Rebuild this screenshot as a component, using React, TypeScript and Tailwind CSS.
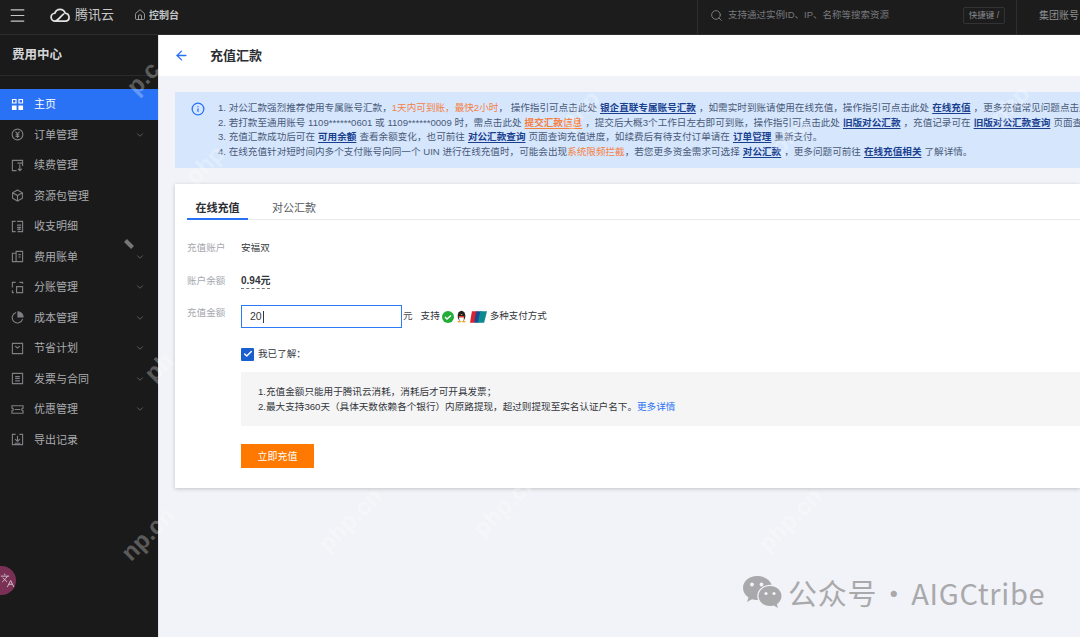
import { ReactNode } from 'react';
import { ArrowLeft, Check, ChevronDown, House, Info, Languages, Menu, Search } from 'lucide-react';

const cjk = '[font-family:"Liberation_Sans","Noto_Sans_CJK_SC",sans-serif]';

const Glyph = (props: { children: ReactNode }) => (
  <svg viewBox="0 0 14 14" fill="none" stroke="currentColor" strokeWidth="1.2" className="size-[13px] shrink-0">
    {props.children}
  </svg>
);

const menuItems: { label: string; chevron?: boolean; active?: boolean; icon: ReactNode }[] = [
  {
    label: '主页',
    active: true,
    icon: (
      <svg viewBox="0 0 14 14" fill="currentColor" className="size-[13px] shrink-0">
        <path d="M1 1h5v5H1zM8 1h5v5H8zM1 8h5v5H1zM8 8h5v5H8z" />
        <path d="M2.2 2.2v2.6h2.6V2.2zM9.2 2.2v2.6h2.6V2.2z" fill="#2a72f5" />
      </svg>
    ),
  },
  {
    label: '订单管理',
    chevron: true,
    icon: (
      <Glyph>
        <circle cx="7" cy="7" r="5.8" />
        <path d="M4.8 3.8 7 6.4l2.2-2.6M7 6.4v4.4M5 7.2h4M5 9h4" />
      </Glyph>
    ),
  },
  {
    label: '续费管理',
    icon: (
      <Glyph>
        <path d="M6 12.5H1.5v-11h11v6M9.5 6v6.5M7.5 10.5l2 2 2-2M7 4.5h5" />
      </Glyph>
    ),
  },
  {
    label: '资源包管理',
    icon: (
      <Glyph>
        <path d="m7 1 5.3 3v6L7 13l-5.3-3V4zM1.7 4 7 7l5.3-3M7 7v6" />
      </Glyph>
    ),
  },
  {
    label: '收支明细',
    icon: (
      <Glyph>
        <path d="M5 12.5H1.5v-11H5M6.5 1.5h6v11H7M6.5 5.5H11M6.5 8H11M8.7 8v3M6.5 10H11" />
      </Glyph>
    ),
  },
  {
    label: '费用账单',
    chevron: true,
    icon: (
      <Glyph>
        <path d="M1.5 3.5h4v9h-4zM5.5 1.5h7v11h-7zM8 5h2.5M8 7.5h2.5" />
      </Glyph>
    ),
  },
  {
    label: '分账管理',
    chevron: true,
    icon: (
      <Glyph>
        <path d="M5 1.5H1.5V7M9 1.5h3.5V3M1.5 10v2.5H3M6 6h6.5v6.5H6z" />
      </Glyph>
    ),
  },
  {
    label: '成本管理',
    chevron: true,
    icon: (
      <svg viewBox="0 0 14 14" fill="none" stroke="currentColor" strokeWidth="1.2" className="size-[13px] shrink-0">
        <path d="M5.5 1.7a5.7 5.7 0 1 0 7 7" />
        <path d="M7.5 1v5.5H13A5.5 5.5 0 0 0 7.5 1Z" fill="currentColor" />
      </svg>
    ),
  },
  {
    label: '节省计划',
    chevron: true,
    icon: (
      <Glyph>
        <path d="M1.5 1.5h11v11h-11zM4.5 4.5 7 6.5l2.5-2" />
      </Glyph>
    ),
  },
  {
    label: '发票与合同',
    chevron: true,
    icon: (
      <Glyph>
        <path d="M1.5 1.5h11v11h-11zM4.5 5h5M4.5 7h5M4.5 9.5h5" />
      </Glyph>
    ),
  },
  {
    label: '优惠管理',
    chevron: true,
    icon: (
      <Glyph>
        <path d="M1 3h12v2.5a1.5 1.5 0 0 0 0 3V11H1V8.5a1.5 1.5 0 0 0 0-3zM4 7h6" />
      </Glyph>
    ),
  },
  {
    label: '导出记录',
    icon: (
      <Glyph>
        <path d="M5 1.5H1.5v11h11v-11H9M7 3v6M4.5 6.5 7 9l2.5-2.5M4 11h6" />
      </Glyph>
    ),
  },
];

// faint diagonal site marks that lie over the whole page: centre x, centre y, text
const marks: [number, number, string][] = [
  [143, 78, 'p.c'],
  [205, 165, 'php'],
  [159, 367, 'ph'],
  [148, 534, 'np.cn'],
  [580, 110, 'php'],
  [1010, 105, 'php'],
  [790, 135, 'php'],
  [505, 505, 'php.cn'],
  [790, 520, 'php.cn'],
  [350, 520, 'php.cn'],
];

const NoticeLink = (props: { children: ReactNode }) => (
  <span className="mx-[3px] font-bold text-[#1a3f8f] underline underline-offset-2">{props.children}</span>
);

const Hot = (props: { children: ReactNode }) => <span className="text-[#f5813f]">{props.children}</span>;

const Row = (props: { label: string; children: ReactNode; className?: string }) => (
  <div className={`flex items-start ${props.className ?? ''}`}>
    <div className="w-[54px] shrink-0 text-[9.6px] leading-[14px] text-[#a5a8ad]">{props.label}</div>
    {props.children}
  </div>
);

export default function App() {
  return (
    <div className={`relative flex h-[637px] w-[1080px] flex-col overflow-hidden bg-[#f2f3f8] ${cjk}`}>
      <header className="flex h-[35px] shrink-0 items-stretch whitespace-nowrap border-b border-[#2e2e2e] bg-[#1c1c1c] text-[#c4c6c9]">
        <div className="flex w-[697px] shrink-0 items-center pb-[4px]">
          <Menu className="ml-[8px] size-[19px]" strokeWidth={1.5} />
          <svg viewBox="0 0 24 16" className="ml-[23px] h-[16px] w-[21px] text-[#e2e2e2]" fill="none" stroke="currentColor" strokeWidth="2">
            <path d="M6 15a4.5 4.5 0 0 1-.5-9C6.5 3 9 1.5 11.5 1.5c3 0 5 1.8 5.8 4.5A4.6 4.6 0 0 1 18.5 15Zm0 0c4-1 7-7 10-8.5" />
          </svg>
          <span className="ml-[4px] text-[13px] text-[#c8c8c8]">腾讯云</span>
          <House className="ml-[20px] size-[12px]" strokeWidth={1.4} />
          <span className="ml-[3px] text-[10px] font-bold">控制台</span>
        </div>
        <div className="flex w-[320px] shrink-0 items-center border-x border-[#2e2e2e] pb-[4px]">
          <Search className="ml-[12px] size-[13px] text-[#8b8d90]" strokeWidth={1.5} />
          <span className="ml-[5px] text-[9.5px] text-[#77797c]">支持通过实例ID、IP、名称等搜索资源</span>
          <span className="ml-auto mr-[11px] rounded-[2px] border border-[#333] px-[5px] py-[2px] text-[8.5px] leading-[11px] text-[#8c8e91]">快捷键 /</span>
        </div>
        <div className="flex items-center pb-[4px] pl-[22px] text-[10px] text-[#8c8e91]">集团账号</div>
      </header>

      <div className="flex min-h-0 flex-1">
        <aside className="w-[158px] shrink-0 bg-[#1a1a1a]">
          <div className="flex h-[41px] items-center border-b border-[#2a2a2a] pl-[12px] text-[12.5px] font-bold text-[#d5d6d8]">费用中心</div>
          <nav className="mt-[13px]">
            {menuItems.map((item) => (
              <div
                key={item.label}
                className={`flex h-[30.5px] items-center pl-[11px] pr-[13px] text-[11px] ${
                  item.active ? 'bg-[#2a72f5] text-white' : 'text-[#a9abae]'
                }`}
              >
                <span className={item.active ? '' : 'text-[#7d7f82]'}>{item.icon}</span>
                <span className="ml-[10px]">{item.label}</span>
                {item.chevron ? <ChevronDown className="ml-auto size-[10px] text-[#66686b]" /> : null}
              </div>
            ))}
          </nav>
        </aside>

        <main className="min-w-0 flex-1 border-l border-[#e3e4e8]">
          <div className="flex h-[41px] items-center bg-white pl-[15px]">
            <ArrowLeft className="size-[15px] text-[#2a72f5]" strokeWidth={2.2} />
            <h1 className="ml-[21px] text-[13px] font-bold text-[#2b2e33]">充值汇款</h1>
          </div>

          <div className="ml-[16px] mt-[16px] flex h-[76px] items-start overflow-hidden bg-[#d5e6fd] pl-[16px] pt-[9px]">
            <Info className="mt-[0.5px] size-[14px] shrink-0 text-[#2a72f5]" strokeWidth={2.2} />
            <div className="ml-[13px] whitespace-nowrap text-[9.6px] leading-[14.5px] text-[#4a5a78]">
              <div>
                1. 对公汇款强烈推荐使用专属账号汇款，<Hot>1天内可到账，最快2小时</Hot>， 操作指引可点击此处
                <NoticeLink>银企直联专属账号汇款</NoticeLink>，如需实时到账请使用在线充值，操作指引可点击此处
                <NoticeLink>在线充值</NoticeLink>，更多充值常见问题点击此处
              </div>
              <div>
                2. 若打款至通用账号 1109******0601 或 1109******0009 时，需点击此处
                <span className="mx-[3px] font-bold text-[#f5813f] underline underline-offset-2">提交汇款信息</span>
                ，提交后大概3个工作日左右即可到账，操作指引可点击此处
                <NoticeLink>旧版对公汇款</NoticeLink>，充值记录可在<NoticeLink>旧版对公汇款查询</NoticeLink>页面查询
              </div>
              <div>
                3. 充值汇款成功后可在<NoticeLink>可用余额</NoticeLink>查看余额变化，也可前往
                <NoticeLink>对公汇款查询</NoticeLink>页面查询充值进度，如续费后有待支付订单请在
                <NoticeLink>订单管理</NoticeLink>重新支付。
              </div>
              <div>
                4. 在线充值针对短时间内多个支付账号向同一个 UIN 进行在线充值时，可能会出现<Hot>系统限频拦截</Hot>，若您更多资金需求可选择
                <NoticeLink>对公汇款</NoticeLink>，更多问题可前往<NoticeLink>在线充值相关</NoticeLink>了解详情。
              </div>
            </div>
          </div>

          <section className="ml-[16px] mt-[16px] h-[304px] bg-white pl-[12px] pt-[13px] shadow-[0_1px_4px_rgba(0,0,0,0.2)]">
            <div className="flex h-[23px] border-b border-[#e8e9ec] text-[11px]">
              <div className="-mb-px w-[61px] border-b-2 border-[#2a72f5] pt-[3px] text-center font-bold text-[#2b2e33]">在线充值</div>
              <div className="ml-[24px] pt-[3px] text-[#55585d]">对公汇款</div>
            </div>

            <Row label="充值账户" className="mt-[21px]">
              <span className="text-[9.6px] leading-[14px] text-[#33363b]">安福双</span>
            </Row>
            <Row label="账户余额" className="mt-[19px]">
              <span className="border-b border-dashed border-[#77797c] text-[10px] font-bold leading-[14px] text-[#33363b]">0.94元</span>
            </Row>
            <Row label="充值金额" className="mt-[17px]">
              <div className="-mt-px flex h-[23px] items-center">
                <div className="h-[23px] w-[161px] bg-[#2a7bf5] p-px">
                  <div className="flex h-full items-center bg-white pl-[8px] text-[10.5px] text-[#33363b]">
                    20<span className="ml-px h-[12px] w-px bg-[#33363b]" />
                  </div>
                </div>
                <span className="ml-px text-[9.6px] text-[#4a4d52]">元</span>
                <span className="ml-[8px] text-[9.6px] text-[#33363b]">支持</span>
                <svg viewBox="0 0 12 12" className="ml-[2px] size-[12px]">
                  <circle cx="6" cy="6" r="6" fill="#22ac38" />
                  <path d="m3 6 2 2 4-3.5" fill="none" stroke="#fff" strokeWidth="1.5" />
                </svg>
                <svg viewBox="0 0 12 13" className="ml-[2px] h-[13px] w-[11px]">
                  <ellipse cx="6" cy="6" rx="4.2" ry="5.8" fill="#222" />
                  <ellipse cx="6" cy="8.8" rx="2.6" ry="2.8" fill="#fff" />
                  <path d="M2.5 6h7l-1.2 1.5H3.7z" fill="#e23b2e" />
                  <path d="M4.8 3.8h2.4L6 5z" fill="#f5a623" />
                  <ellipse cx="3.5" cy="12" rx="2" ry="1" fill="#f5a623" />
                  <ellipse cx="8.5" cy="12" rx="2" ry="1" fill="#f5a623" />
                </svg>
                <svg viewBox="0 0 18 12" className="ml-[3px] h-[12px] w-[17px]">
                  <path d="M2 0h6L5 12H0z" fill="#d9232e" />
                  <path d="M6.5 0h6l-3 12h-5z" fill="#1a4a94" />
                  <path d="M11 0h7l-3 12H8z" fill="#0b8a8f" />
                </svg>
                <span className="ml-[3px] whitespace-nowrap text-[9.5px] text-[#33363b]">多种支付方式</span>
              </div>
            </Row>

            <div className="ml-[54px] mt-[19px] flex items-center">
              <span className="flex size-[13px] items-center justify-center rounded-[1px] bg-[#1a5fd0] text-white">
                <Check className="size-[10px]" strokeWidth={3.5} />
              </span>
              <span className="ml-[4px] text-[9.6px] text-[#33363b]">我已了解：</span>
            </div>

            <div className="ml-[54px] mt-[11px] h-[54px] bg-[#f5f5f6] pl-[17px] pt-[12px] text-[9.6px] leading-[15px] text-[#33363b]">
              <div>1.充值金额只能用于腾讯云消耗，消耗后才可开具发票；</div>
              <div>
                2.最大支持360天（具体天数依赖各个银行）内原路提现，超过则提现至实名认证户名下。
                <span className="text-[#2a72f5]">更多详情</span>
              </div>
            </div>

            <button className="ml-[54px] mt-[18px] h-[24px] w-[73px] bg-[#ff7800] text-[10px] text-white">立即充值</button>
          </section>
        </main>
      </div>

      {marks.map(([x, y, text]) => (
        <span
          key={`${x}-${y}`}
          style={{ left: x, top: y }}
          className="pointer-events-none absolute -translate-x-1/2 -translate-y-1/2 -rotate-45 text-[24px] font-bold text-white/30"
        >
          {text}
        </span>
      ))}
      <div className="pointer-events-none absolute left-[124px] top-[242px] h-[4px] w-[10px] rotate-45 bg-[#777]" />

      <div className="absolute -left-[13px] top-[566px] flex size-[29px] items-center justify-end rounded-full bg-[#7a2f55] pr-[1px] text-[#cdbcc5]">
        <Languages className="size-[15px]" strokeWidth={1.6} />
      </div>

      <div className="absolute left-[742px] top-[575px] flex items-center text-[#a9a9ab]">
        <svg viewBox="0 0 40 34" className="h-[34px] w-[40px]" fill="currentColor">
          <path d="M15 1C7 1 1 6 1 13c0 4 2 7 5.5 9.5L5 27l5-2.7c1.6.4 3 .7 5 .7h1c-.5-1.3-.7-2.5-.7-3.8C15.3 14.5 21 9.8 28.5 9.8h1.2C28 4.7 22 1 15 1Z" />
          <path d="M39.5 21c0-6-5.5-10-11.5-10S16.5 15 16.5 21 22 31 28 31c1.3 0 2.5-.2 3.8-.6L36 33l-1.1-3.8c2.8-2 4.6-4.8 4.6-8.2Z" />
          <circle cx="10" cy="9.5" r="1.9" fill="#f2f3f8" />
          <circle cx="19.5" cy="9.5" r="1.9" fill="#f2f3f8" />
          <circle cx="24" cy="18.5" r="1.6" fill="#f2f3f8" />
          <circle cx="32" cy="18.5" r="1.6" fill="#f2f3f8" />
        </svg>
        <span className="ml-[6px] whitespace-nowrap text-[29px] leading-[34px] tracking-[0.7px] [word-spacing:-5px] [font-family:'Noto_Sans_CJK_SC',sans-serif]">公众号 · AIGCtribe</span>
      </div>
    </div>
  );
}
